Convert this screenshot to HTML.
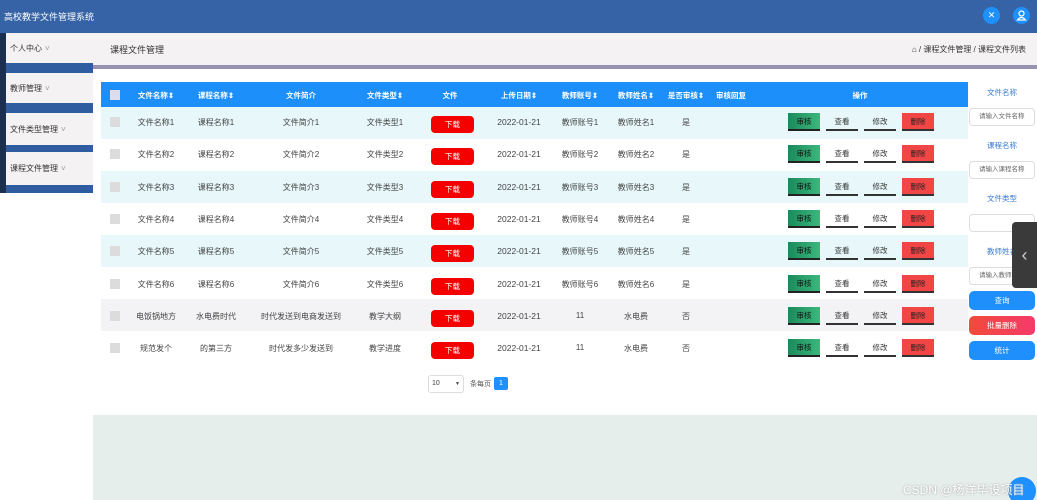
<!DOCTYPE html><html><head><meta charset="utf-8"><style>
*{margin:0;padding:0;box-sizing:border-box}
html,body{width:1037px;height:500px;overflow:hidden}
body{position:relative;background:#fff;font-family:"Liberation Sans","Noto Sans CJK SC",sans-serif;font-size:8px;color:#444}
.a{position:absolute}
.hdr{left:0;top:0;width:1037px;height:33px;background:#3663a6;color:#fff;font-size:9px}
.side{left:0;top:33px;width:93px;height:160px;background:#2f5d9f}
.si{position:absolute;left:6px;width:87px;background:#f4f2f3;font-size:8px;color:#333;padding-left:4px;display:flex;align-items:center}
.edge{left:0;top:33px;width:6px;height:160px;background:#1c2f50}
.bc{left:93px;top:33px;width:944px;height:32px;background:#f4f2f3}
.pl{left:93px;top:65px;width:944px;height:4px;background:#9692b0}
.th{left:101px;top:82px;width:867px;height:25px;background:#1d8ffb}
.c{position:absolute;transform:translateX(-50%);white-space:nowrap;text-align:center}
.row{position:absolute;left:101px;width:867px;height:32px}
.cb{position:absolute;left:110px;width:10px;height:10px;background:#dcdcdc}
.dl{position:absolute;left:431px;width:43px;height:17px;background:#f40000;border-radius:4px;color:#fff;text-align:center;line-height:17px;font-size:7.5px}
.b{position:absolute;width:32px;height:18px;text-align:center;line-height:18px;font-size:7.5px}
.sh{background:linear-gradient(90deg,#1b8a5c,#3bb87c);border-bottom:2px solid #222;color:#111}
.ck{background:transparent;border-bottom:2px solid #333;color:#333}
.del{background:#f24545;border-bottom:2px solid #333;color:#222}
.rl{position:absolute;left:969px;width:66px;text-align:center;color:#3a7bd5;font-size:7.5px}
.inp{position:absolute;left:969px;width:66px;height:18px;border:1px solid #ddd;border-radius:4px;font-size:6.5px;color:#666;line-height:16px;padding-left:9px;background:#fff}
.rb{position:absolute;left:969px;width:66px;height:19px;border-radius:5px;color:#fff;text-align:center;line-height:19px;font-size:7.5px}
</style></head><body>
<div class="a hdr"><span class="a" style="left:4px;top:10px">高校教学文件管理系统</span>
<div class="a" style="left:983px;top:7px;width:17px;height:17px;border-radius:50%;background:#1e90ff;color:#fff;font-size:9px;text-align:center;line-height:17px">✕</div>
<div class="a" style="left:1013px;top:7px;width:17px;height:17px;border-radius:50%;background:#1e90ff"><svg width="17" height="17"><circle cx="8.5" cy="6.5" r="2.5" fill="none" stroke="#fff" stroke-width="1.2"/><path d="M4.5 13 Q8.5 8 12.5 13 Z" fill="none" stroke="#fff" stroke-width="1.2"/></svg></div></div>
<div class="a side"></div>
<div class="si" style="top:33px;height:30px">个人中心 <span style="color:#999;margin-left:3px">˅</span></div>
<div class="si" style="top:73px;height:30px">教师管理 <span style="color:#999;margin-left:3px">˅</span></div>
<div class="si" style="top:113px;height:32px">文件类型管理 <span style="color:#999;margin-left:3px">˅</span></div>
<div class="si" style="top:152px;height:33px">课程文件管理 <span style="color:#999;margin-left:3px">˅</span></div>
<div class="a edge"></div>
<div class="a bc"><span class="a" style="left:17px;top:10px;font-size:9px;color:#333">课程文件管理</span><span class="a" style="right:11px;top:11px;font-size:8px;color:#333">⌂ / 课程文件管理 / 课程文件列表</span></div>
<div class="a pl"></div>
<div class="a th"></div>
<div class="a" style="left:110px;top:90px;width:10px;height:10px;background:#dde;"></div>
<div style="position:absolute;top:90px;left:0;color:#fff;font-weight:bold;font-size:7.5px">
<span class="c" style="left:156px">文件名称⇕</span><span class="c" style="left:216px">课程名称⇕</span><span class="c" style="left:301px">文件简介</span><span class="c" style="left:385px">文件类型⇕</span><span class="c" style="left:450px">文件</span><span class="c" style="left:519px">上传日期⇕</span><span class="c" style="left:580px">教师账号⇕</span><span class="c" style="left:636px">教师姓名⇕</span><span class="c" style="left:686px">是否审核⇕</span><span class="c" style="left:731px">审核回复</span><span class="c" style="left:860px">操作</span></div>
<div class="row" style="top:107px;background:#e8f8fa"></div>
<div class="row" style="top:171px;background:#e8f8fa"></div>
<div class="row" style="top:235px;background:#e8f8fa"></div>
<div class="row" style="top:299px;background:#f3f3f5"></div>
<div id="rows"></div>
<script>
var d=[["文件名称1","课程名称1","文件简介1","文件类型1","教师账号1","教师姓名1","是"],["文件名称2","课程名称2","文件简介2","文件类型2","教师账号2","教师姓名2","是"],["文件名称3","课程名称3","文件简介3","文件类型3","教师账号3","教师姓名3","是"],["文件名称4","课程名称4","文件简介4","文件类型4","教师账号4","教师姓名4","是"],["文件名称5","课程名称5","文件简介5","文件类型5","教师账号5","教师姓名5","是"],["文件名称6","课程名称6","文件简介6","文件类型6","教师账号6","教师姓名6","是"],["电饭锅地方","水电费时代","时代发送到电商发送到","教学大纲","11","水电费","否"],["规范发个","的第三方","时代发多少发送到","教学进度","11","水电费","否"]];
var h="";for(var i=0;i<8;i++){var y=107+i*32.3,t=y+10,r=d[i];
h+='<div class="cb" style="top:'+(y+10)+'px"></div>';
var xs=[156,216,301,385];for(var j=0;j<4;j++)h+='<span class="c" style="left:'+xs[j]+'px;top:'+t+'px">'+r[j]+'</span>';
h+='<div class="dl" style="top:'+(y+9)+'px">下载</div>';
h+='<span class="c" style="left:519px;top:'+t+'px;font-size:8.5px">2022-01-21</span>';
h+='<span class="c" style="left:580px;top:'+t+'px">'+r[4]+'</span><span class="c" style="left:636px;top:'+t+'px">'+r[5]+'</span><span class="c" style="left:686px;top:'+t+'px">'+r[6]+'</span>';
h+='<div class="b sh" style="left:788px;top:'+(y+6)+'px">审核</div><div class="b ck" style="left:826px;top:'+(y+6)+'px">查看</div><div class="b ck" style="left:864px;top:'+(y+6)+'px">修改</div><div class="b del" style="left:902px;top:'+(y+6)+'px">删除</div>';}
document.getElementById("rows").innerHTML=h;
</script>
<div class="a" style="left:428px;top:375px;width:36px;height:18px;border:1px solid #ddd;border-radius:3px;font-size:7px;line-height:16px;padding-left:3px">10<span style="position:absolute;right:3px;font-size:5px">▼</span></div>
<span class="a" style="left:470px;top:379px;font-size:7px;color:#555">条每页</span>
<div class="a" style="left:494px;top:377px;width:14px;height:13px;background:#1e90ff;border-radius:2px;color:#fff;font-size:7px;text-align:center;line-height:13px">1</div>
<div class="a" style="left:93px;top:415px;width:944px;height:85px;background:#e6eeeb"></div>
<div class="rl" style="top:87px">文件名称</div>
<div class="inp" style="top:108px">请输入文件名称</div>
<div class="rl" style="top:140px">课程名称</div>
<div class="inp" style="top:161px">请输入课程名称</div>
<div class="rl" style="top:193px">文件类型</div>
<div class="inp" style="top:214px"></div>
<div class="rl" style="top:246px">教师姓名</div>
<div class="inp" style="top:267px">请输入教师姓名</div>
<div class="rb" style="top:291px;background:#1e8ffb">查询</div>
<div class="rb" style="top:316px;background:linear-gradient(90deg,#f24a3a,#f53a6a)">批量删除</div>
<div class="rb" style="top:341px;background:#1e8ffb">统计</div>
<div class="a" style="left:1012px;top:222px;width:25px;height:66px;background:#3a3a3a;border-radius:4px 0 0 4px;color:#ccc;font-size:18px;text-align:center;line-height:66px">‹</div>
<div class="a" style="left:1008px;top:477px;width:28px;height:28px;border-radius:50%;background:#1e90ff"></div>
<span class="a" style="left:903px;top:481px;font-size:12px;color:#fff;text-shadow:0 0 2px #999">CSDN @杨洋毕设项目</span>
</body></html>
